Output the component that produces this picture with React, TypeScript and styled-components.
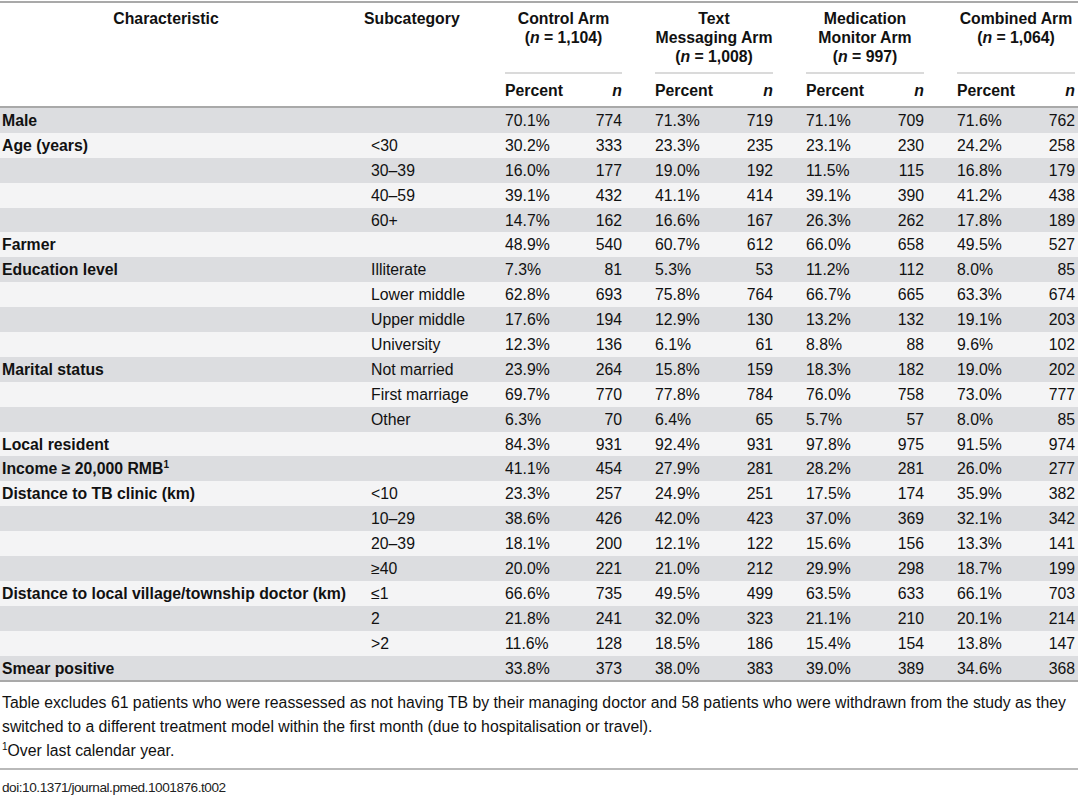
import React from "react";
import styled, { createGlobalStyle } from "styled-components";

const Global = createGlobalStyle`
  html, body { margin: 0; padding: 0; background: #ffffff; }
  body { font-family: "Liberation Sans", Arial, Helvetica, sans-serif; color: #111; }
`;

const COLS = "364px 141px 117px 33px 118px 33px 118px 33px 118px 1px";
const FS = "15.8px";

const Page = styled.div`
  width: 1078px;
  padding-top: 1px;
`;

const Table = styled.div`
  border-top: 2px solid #a9a9a9;
  border-bottom: 2px solid #a9a9a9;
`;

const HeadTop = styled.div`
  display: grid;
  grid-template-columns: ${COLS};
  font-size: ${FS};
  font-weight: bold;
  line-height: 19px;
`;

const HeadCell = styled.div<{ $align?: string; $padR?: number }>`
  padding: 6px ${(p) => p.$padR ?? 0}px 6px 0;
  text-align: ${(p) => p.$align ?? "left"};
  white-space: nowrap;
`;

const ArmTitle = styled.div`
  padding: 6px 0 6px;
  text-align: center;
  white-space: nowrap;
  border-bottom: 2px solid #dadada;
`;

const HeadSub = styled.div`
  display: grid;
  grid-template-columns: ${COLS};
  height: 34px;
  padding-top: 1px;
  box-sizing: border-box;
  align-items: center;
  font-size: ${FS};
  font-weight: bold;
  border-bottom: 2px solid #a9a9a9;
`;

const Pair = styled.div`
  display: flex;
  justify-content: space-between;
  align-items: center;
`;

const Row = styled.div<{ $dark: boolean }>`
  display: grid;
  grid-template-columns: ${COLS};
  height: 24.9px;
  padding-top: 1px;
  box-sizing: border-box;
  align-items: center;
  font-size: ${FS};
  background: ${(p) => (p.$dark ? "#dcdde0" : "#f4f4f5")};
`;

const CharCell = styled.div`
  padding-left: 2px;
  font-weight: bold;
  white-space: nowrap;
`;

const SubCell = styled.div`
  padding-left: 7px;
  white-space: nowrap;
`;

const Spacer = styled.div``;

const Sup = styled.sup`
  font-size: 10px;
  line-height: 0;
  vertical-align: 6px;
`;

const Note = styled.div`
  font-size: ${FS};
  line-height: 24px;
  padding: 9px 0 0 2px;
`;

const NoteLine = styled.span`
  display: block;
  white-space: nowrap;
`;

const Rule = styled.div`
  margin-top: 5px;
  border-top: 2px solid #b9b9b9;
`;

const Doi = styled.div`
  font-size: 13.6px;
  letter-spacing: -0.45px;
  line-height: 22px;
  padding: 7px 0 0 2px;
  color: #222;
`;

const rows: { c: React.ReactNode; s: React.ReactNode; v: string[] }[] = [
  { c: "Male", s: "", v: ["70.1%", "774", "71.3%", "719", "71.1%", "709", "71.6%", "762"] },
  { c: "Age (years)", s: "<30", v: ["30.2%", "333", "23.3%", "235", "23.1%", "230", "24.2%", "258"] },
  { c: "", s: "30–39", v: ["16.0%", "177", "19.0%", "192", "11.5%", "115", "16.8%", "179"] },
  { c: "", s: "40–59", v: ["39.1%", "432", "41.1%", "414", "39.1%", "390", "41.2%", "438"] },
  { c: "", s: "60+", v: ["14.7%", "162", "16.6%", "167", "26.3%", "262", "17.8%", "189"] },
  { c: "Farmer", s: "", v: ["48.9%", "540", "60.7%", "612", "66.0%", "658", "49.5%", "527"] },
  { c: "Education level", s: "Illiterate", v: ["7.3%", "81", "5.3%", "53", "11.2%", "112", "8.0%", "85"] },
  { c: "", s: "Lower middle", v: ["62.8%", "693", "75.8%", "764", "66.7%", "665", "63.3%", "674"] },
  { c: "", s: "Upper middle", v: ["17.6%", "194", "12.9%", "130", "13.2%", "132", "19.1%", "203"] },
  { c: "", s: "University", v: ["12.3%", "136", "6.1%", "61", "8.8%", "88", "9.6%", "102"] },
  { c: "Marital status", s: "Not married", v: ["23.9%", "264", "15.8%", "159", "18.3%", "182", "19.0%", "202"] },
  { c: "", s: "First marriage", v: ["69.7%", "770", "77.8%", "784", "76.0%", "758", "73.0%", "777"] },
  { c: "", s: "Other", v: ["6.3%", "70", "6.4%", "65", "5.7%", "57", "8.0%", "85"] },
  { c: "Local resident", s: "", v: ["84.3%", "931", "92.4%", "931", "97.8%", "975", "91.5%", "974"] },
  {
    c: (
      <>
        Income ≥ 20,000 RMB<Sup>1</Sup>
      </>
    ),
    s: "",
    v: ["41.1%", "454", "27.9%", "281", "28.2%", "281", "26.0%", "277"],
  },
  { c: "Distance to TB clinic (km)", s: "<10", v: ["23.3%", "257", "24.9%", "251", "17.5%", "174", "35.9%", "382"] },
  { c: "", s: "10–29", v: ["38.6%", "426", "42.0%", "423", "37.0%", "369", "32.1%", "342"] },
  { c: "", s: "20–39", v: ["18.1%", "200", "12.1%", "122", "15.6%", "156", "13.3%", "141"] },
  { c: "", s: "≥40", v: ["20.0%", "221", "21.0%", "212", "29.9%", "298", "18.7%", "199"] },
  { c: "Distance to local village/township doctor (km)", s: "≤1", v: ["66.6%", "735", "49.5%", "499", "63.5%", "633", "66.1%", "703"] },
  { c: "", s: "2", v: ["21.8%", "241", "32.0%", "323", "21.1%", "210", "20.1%", "214"] },
  { c: "", s: ">2", v: ["11.6%", "128", "18.5%", "186", "15.4%", "154", "13.8%", "147"] },
  { c: "Smear positive", s: "", v: ["33.8%", "373", "38.0%", "383", "39.0%", "389", "34.6%", "368"] },
];

const arms: React.ReactNode[] = [
  <>
    Control Arm
    <br />(<i>n</i> = 1,104)
  </>,
  <>
    Text
    <br />
    Messaging Arm
    <br />(<i>n</i> = 1,008)
  </>,
  <>
    Medication
    <br />
    Monitor Arm
    <br />(<i>n</i> = 997)
  </>,
  <>
    Combined Arm
    <br />(<i>n</i> = 1,064)
  </>,
];

function ArmCells({ v }: { v: string[] }) {
  const out: React.ReactNode[] = [];
  for (let i = 0; i < 4; i++) {
    if (i > 0) out.push(<Spacer key={"s" + i} />);
    out.push(
      <Pair key={"p" + i}>
        <span>{v[i * 2]}</span>
        <span>{v[i * 2 + 1]}</span>
      </Pair>
    );
  }
  return <>{out}</>;
}

export default function App() {
  return (
    <Page>
      <Global />
      <Table>
        <HeadTop>
          <HeadCell $align="center" $padR={32}>
            Characteristic
          </HeadCell>
          <HeadCell>Subcategory</HeadCell>
          {arms.map((a, i) => (
            <React.Fragment key={i}>
              {i > 0 && <Spacer />}
              <ArmTitle>{a}</ArmTitle>
            </React.Fragment>
          ))}
          <Spacer />
        </HeadTop>
        <HeadSub>
          <Spacer />
          <Spacer />
          {[0, 1, 2, 3].map((i) => (
            <React.Fragment key={i}>
              {i > 0 && <Spacer />}
              <Pair>
                <span>Percent</span>
                <i>n</i>
              </Pair>
            </React.Fragment>
          ))}
          <Spacer />
        </HeadSub>
        {rows.map((r, i) => (
          <Row key={i} $dark={i % 2 === 0}>
            <CharCell>{r.c}</CharCell>
            <SubCell>{r.s}</SubCell>
            <ArmCells v={r.v} />
            <Spacer />
          </Row>
        ))}
      </Table>
      <Note>
        <NoteLine>
          Table excludes 61 patients who were reassessed as not having TB by their managing doctor and 58 patients who were withdrawn from the study as they
        </NoteLine>
        <NoteLine>switched to a different treatment model within the first month (due to hospitalisation or travel).</NoteLine>
        <NoteLine>
          <Sup>1</Sup>Over last calendar year.
        </NoteLine>
      </Note>
      <Rule />
      <Doi>doi:10.1371/journal.pmed.1001876.t002</Doi>
    </Page>
  );
}
